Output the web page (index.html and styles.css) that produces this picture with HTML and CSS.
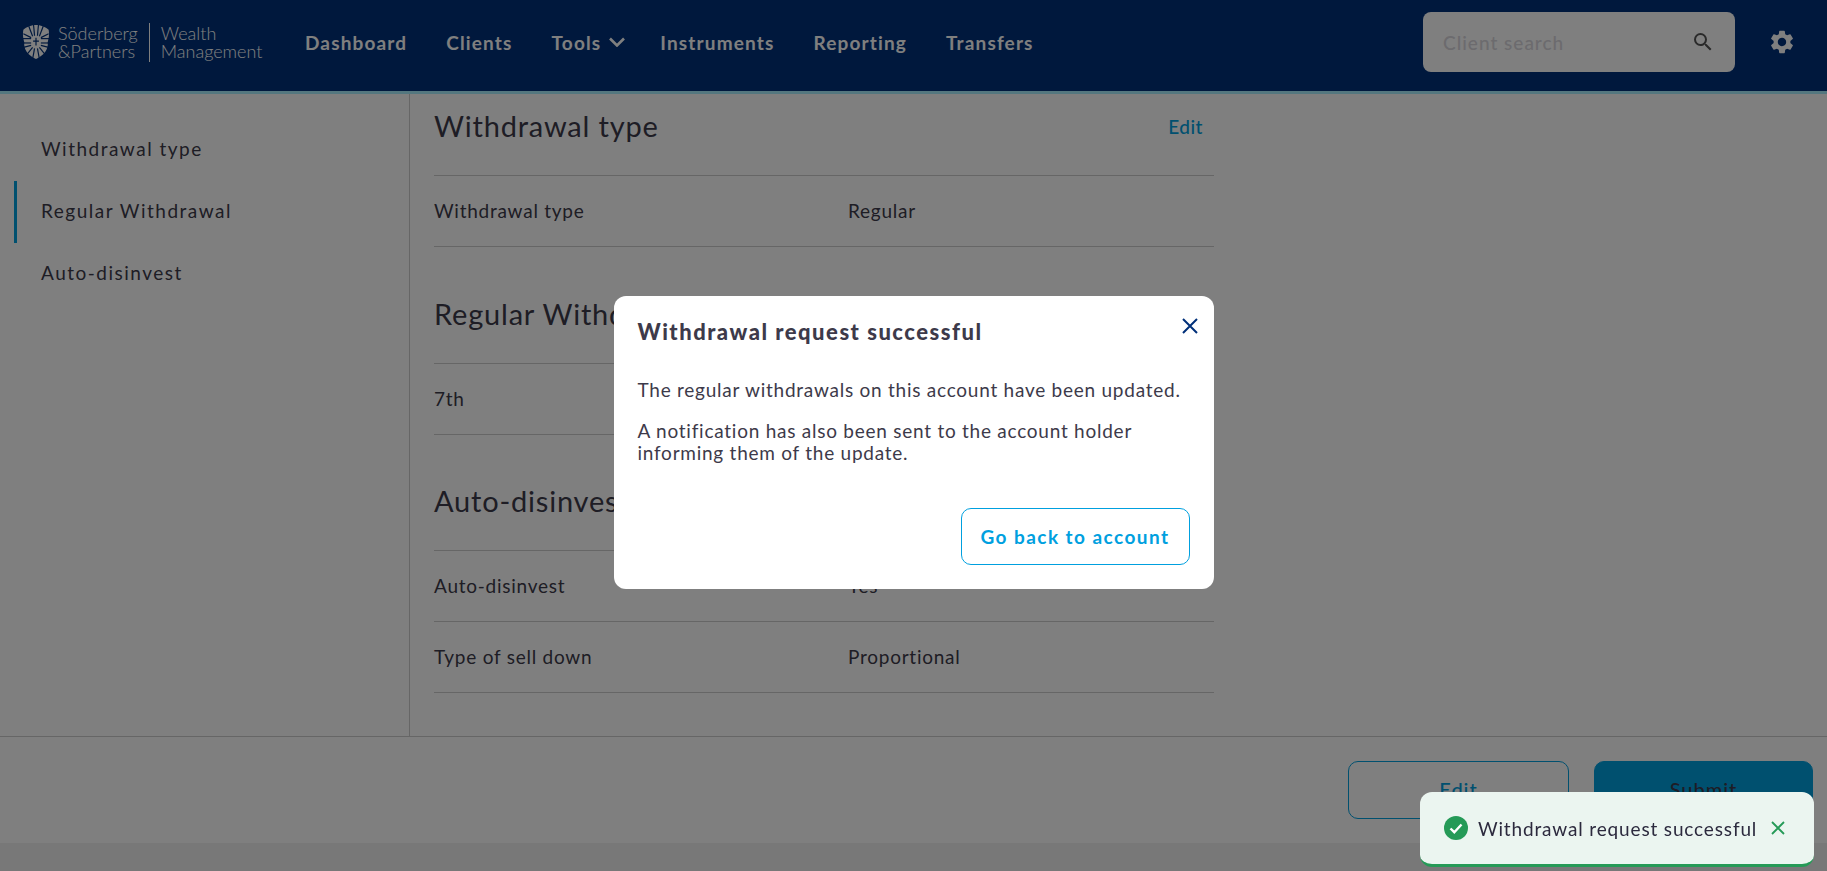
FILE: index.html
```html
<!DOCTYPE html>
<html lang="en">
<head>
  <meta charset="UTF-8">
  <meta name="viewport" content="width=device-width, initial-scale=1.0">
  <title>Withdrawal request</title>
  <link rel="stylesheet" href="styles.css">
</head>
<body>

  <header class="topbar">
    <div class="logo">
      <svg class="logo-mark" viewBox="0 0 28 36" width="28" height="35">
        <path d="M14 0C18 0 24 2 27 5C28 11 27 14 26 18C27 24 23 31 14 35C5 31 1 24 2 18C1 14 0 11 1 5C4 2 10 0 14 0Z" fill="#fff"/>
        <g fill="none" stroke="#00307a" stroke-width="1.200">
          <path d="M11.500 0L12.500 11"/>
          <path d="M16.500 0L15.500 11"/>
          <path d="M6.500 1L10.500 11.500"/>
          <path d="M21.500 1L17.500 11.500"/>
          <path d="M1 9L9 13"/>
          <path d="M27 9L19 13"/>
          <path d="M0 14H9"/>
          <path d="M28 14H19"/>
          <path d="M0 18.500H9"/>
          <path d="M28 18.500H19"/>
          <path d="M1 23L9 21"/>
          <path d="M27 23L19 21"/>
          <path d="M5 30L10.500 23"/>
          <path d="M23 30L17.500 23"/>
          <path d="M10.500 35L12.500 24"/>
          <path d="M17.500 35L15.500 24"/>
          <path d="M14 13V21M11 16.500H17"/>
        </g>
      </svg>
      <div class="logo-name">Söderberg<br>&amp;Partners</div>
      <div class="logo-sub">Wealth<br>Management</div>
    </div>

    <nav class="mainnav">
      <a href="#">Dashboard</a>
      <a href="#">Clients</a>
      <a href="#" class="has-menu">Tools
        <svg viewBox="0 0 16 10" width="16" height="10"><path d="M1 1.500L8 8.500L15 1.500" fill="none" stroke="#fff" stroke-width="2.600"/></svg>
      </a>
      <a href="#">Instruments</a>
      <a href="#">Reporting</a>
      <a href="#">Transfers</a>
    </nav>

    <div class="search">
      <span class="search-text">Client search</span>
      <svg viewBox="0 0 24 24" width="24" height="24"><path d="M15.500 14h-.79l-.28-.27A6.470 6.470 0 0 0 16 9.500 6.500 6.500 0 1 0 9.500 16c1.610 0 3.090-.59 4.230-1.570l.27.28v.79l5 4.990L20.490 19l-4.990-5zm-6 0C7.010 14 5 11.990 5 9.500S7.010 5 9.500 5 14 7.010 14 9.500 11.990 14 9.500 14z" fill="#555"/></svg>
    </div>
    <svg class="gear" viewBox="0 0 24 24" width="28" height="28"><path d="M19.140 12.940c.04-.3.060-.61.060-.94 0-.32-.02-.64-.07-.94l2.030-1.580a.49.49 0 0 0 .12-.61l-1.920-3.320a.49.49 0 0 0-.59-.22l-2.390.96c-.5-.38-1.030-.7-1.620-.94l-.36-2.540a.484.484 0 0 0-.48-.41h-3.840c-.24 0-.43.17-.47.41l-.36 2.540c-.59.24-1.130.57-1.620.94l-2.390-.96c-.22-.08-.47 0-.59.22L2.740 8.870c-.12.21-.08.47.12.61l2.030 1.580c-.05.3-.09.63-.09.94s.02.64.07.94l-2.030 1.580a.49.49 0 0 0-.12.61l1.920 3.320c.12.22.37.29.59.22l2.390-.96c.5.38 1.030.7 1.620.94l.36 2.540c.05.24.24.41.48.41h3.840c.24 0 .44-.17.47-.41l.36-2.540c.59-.24 1.130-.56 1.620-.94l2.390.96c.22.08.47 0 .59-.22l1.920-3.320c.12-.22.07-.47-.12-.61l-2.010-1.580zM12 15.600c-1.980 0-3.600-1.620-3.600-3.600s1.620-3.600 3.600-3.600 3.600 1.620 3.600 3.600-1.620 3.600-3.600 3.600z" fill="#fff"/></svg>
  </header>

  <div class="layout">
    <aside class="sidenav">
      <a href="#">Withdrawal type</a>
      <a href="#" class="active">Regular Withdrawal</a>
      <a href="#">Auto-disinvest</a>
    </aside>

    <main class="content">
      <section class="section first">
        <div class="section-head">
          <h2>Withdrawal type</h2>
          <a href="#" class="edit-link">Edit</a>
        </div>
        <div class="row"><span>Withdrawal type</span><span>Regular</span></div>
      </section>

      <section class="section">
        <div class="section-head">
          <h2>Regular Withdrawal</h2>
        </div>
        <div class="row"><span>7th</span><span></span></div>
      </section>

      <section class="section last">
        <div class="section-head">
          <h2>Auto-disinvest</h2>
        </div>
        <div class="row"><span>Auto-disinvest</span><span>Yes</span></div>
        <div class="row"><span>Type of sell down</span><span>Proportional</span></div>
      </section>
    </main>
  </div>

  <footer class="actions">
    <button class="btn btn-outline">Edit</button>
    <button class="btn btn-solid">Submit</button>
  </footer>
  <div class="bottom-strip"></div>

  <div class="overlay">
    <div class="modal">
      <svg class="modal-close" viewBox="0 0 18 18" width="18" height="18"><path d="M2 2L16 16M16 2L2 16" fill="none" stroke="#00307a" stroke-width="2"/></svg>
      <h3>Withdrawal request successful</h3>
      <p>The regular withdrawals on this account have been updated.</p>
      <p>A notification has also been sent to the account holder informing them of the update.</p>
      <div class="modal-actions">
        <button class="btn-back">Go back to account</button>
      </div>
    </div>
  </div>

  <div class="toast">
    <svg viewBox="0 0 24 24" width="24" height="24"><circle cx="12" cy="12" r="12" fill="#259a57"/><path d="M6.500 12.500L10.300 16.200L17.500 8.500" fill="none" stroke="#fff" stroke-width="2.400"/></svg>
    <span>Withdrawal request successful</span>
    <svg viewBox="0 0 16 16" width="16" height="16"><path d="M2 2L14 14M14 2L2 14" fill="none" stroke="#259a57" stroke-width="1.800"/></svg>
  </div>

</body>
</html>
```

FILE: styles.css
```css
* {
  box-sizing: border-box;
}

html, body {
  height: 100%;
}

body {
  margin: 0;
  font-family: Lato, "Noto Sans", sans-serif;
  font-size: 19px;
  letter-spacing: 0.75px;
  color: #3d3a4a;
  background-color: #fff;
  overflow: hidden;
}

a {
  text-decoration: none;
  color: inherit;
}

.topbar {
  display: flex;
  align-items: center;
  height: 94px;
  padding: 0 31px 7px 22px;
  background-color: #00307a;
  border-bottom: 3px solid #a8eeff;
  color: #fff;
}

.logo {
  display: flex;
  align-items: center;
  width: 283px;
}

.logo-mark {
  margin-right: 8px;
}

.logo-name, .logo-sub {
  font-weight: 300;
  font-size: 18px;
  line-height: 18.5px;
  letter-spacing: 0;
}

.logo-name {
  padding: 1px 11px 1px 0;
  border-right: 1px solid #fff;
  margin-right: 11px;
}

.mainnav {
  display: flex;
  gap: 39px;
  font-weight: 700;
  letter-spacing: 1.15px;
}

.has-menu {
  display: flex;
  align-items: center;
  gap: 8px;
}

.has-menu svg {
  margin-right: -4px;
}

.search {
  display: flex;
  align-items: center;
  justify-content: space-between;
  width: 312px;
  height: 60px;
  margin-left: auto;
  padding: 0 20px;
  background-color: #fff;
  border-radius: 8px;
}

.search-text {
  font-weight: 500;
  letter-spacing: 1px;
  color: #d8d6dc;
}

.gear {
  margin-left: 33px;
}

.layout {
  display: flex;
  height: 642px;
}

.sidenav {
  width: 410px;
  padding: 25px 0 0 14px;
  border-right: 1px solid #ccc;
  letter-spacing: 1.5px;
}

.sidenav a {
  display: flex;
  align-items: center;
  height: 62px;
  padding: 0 0 3px 27px;
}

.sidenav a.active {
  padding-left: 24px;
  border-left: 3px solid #00a0df;
}

.content {
  width: 804px;
  padding-left: 24px;
}

.section-head {
  display: flex;
  justify-content: space-between;
  align-items: center;
  padding: 51px 11px 33px 0;
  border-bottom: 1px solid #ccc;
}

.first .section-head {
  padding-top: 16px;
}

.last .section-head {
  padding-top: 50px;
}

.section-head h2 {
  margin: 0;
  font-size: 29px;
  line-height: 32px;
  font-weight: 400;
  letter-spacing: 0.8px;
}

.edit-link {
  font-weight: 500;
  letter-spacing: 0.5px;
  color: #00a0df;
}

.row {
  display: grid;
  grid-template-columns: 414px 1fr;
  align-items: center;
  height: 71px;
  padding-bottom: 2px;
  border-bottom: 1px solid #ccc;
}

.actions {
  display: flex;
  justify-content: flex-end;
  gap: 25px;
  height: 107px;
  padding: 24px 14px 0 0;
  border-top: 1px solid #ccc;
}

.btn {
  width: 221px;
  height: 58px;
  padding-bottom: 3px;
  font: inherit;
  font-size: 20px;
  font-weight: 500;
  letter-spacing: 1px;
  border-radius: 10px;
  border: 1px solid #00a0df;
}

.btn-outline {
  background-color: #fff;
  color: #00a0df;
}

.btn-solid {
  width: 219px;
  background-color: #00a0df;
  color: #3d3a4a;
}

.bottom-strip {
  height: 28px;
  background-color: #f0f0f0;
}

.overlay {
  position: fixed;
  top: 0;
  left: 0;
  right: 0;
  bottom: 0;
  display: flex;
  justify-content: center;
  align-items: flex-start;
  padding-top: 296px;
  background-color: rgba(0, 0, 0, 0.5);
}

.modal {
  position: relative;
  width: 600px;
  height: 293px;
  padding: 23px 24px;
  background-color: #fff;
  border-radius: 12px;
}

.modal-close {
  position: absolute;
  top: 21px;
  right: 15px;
}

.modal h3 {
  margin: 0 0 34px;
  font-size: 22px;
  line-height: 26px;
  font-weight: 900;
  letter-spacing: 1.5px;
}

.modal p {
  margin: 0 0 19px;
  line-height: 22px;
}

.modal-actions {
  display: flex;
  justify-content: flex-end;
  position: absolute;
  right: 24px;
  bottom: 24px;
}

.btn-back {
  width: 229px;
  height: 57px;
  padding-bottom: 2px;
  font: inherit;
  font-weight: 700;
  letter-spacing: 1.45px;
  color: #00a0df;
  background-color: #fff;
  border: 1px solid #00a0df;
  border-radius: 10px;
}

.toast {
  position: fixed;
  left: 1420px;
  top: 792px;
  display: flex;
  align-items: center;
  width: 394px;
  height: 75px;
  padding: 0 28px 0 24px;
  background-color: #ebf5f0;
  border-bottom: 3px solid #259a57;
  border-radius: 12px;
  letter-spacing: 0.85px;
  color: #2c2a3e;
}

.toast span {
  margin: 0 auto 0 10px;
}
```
